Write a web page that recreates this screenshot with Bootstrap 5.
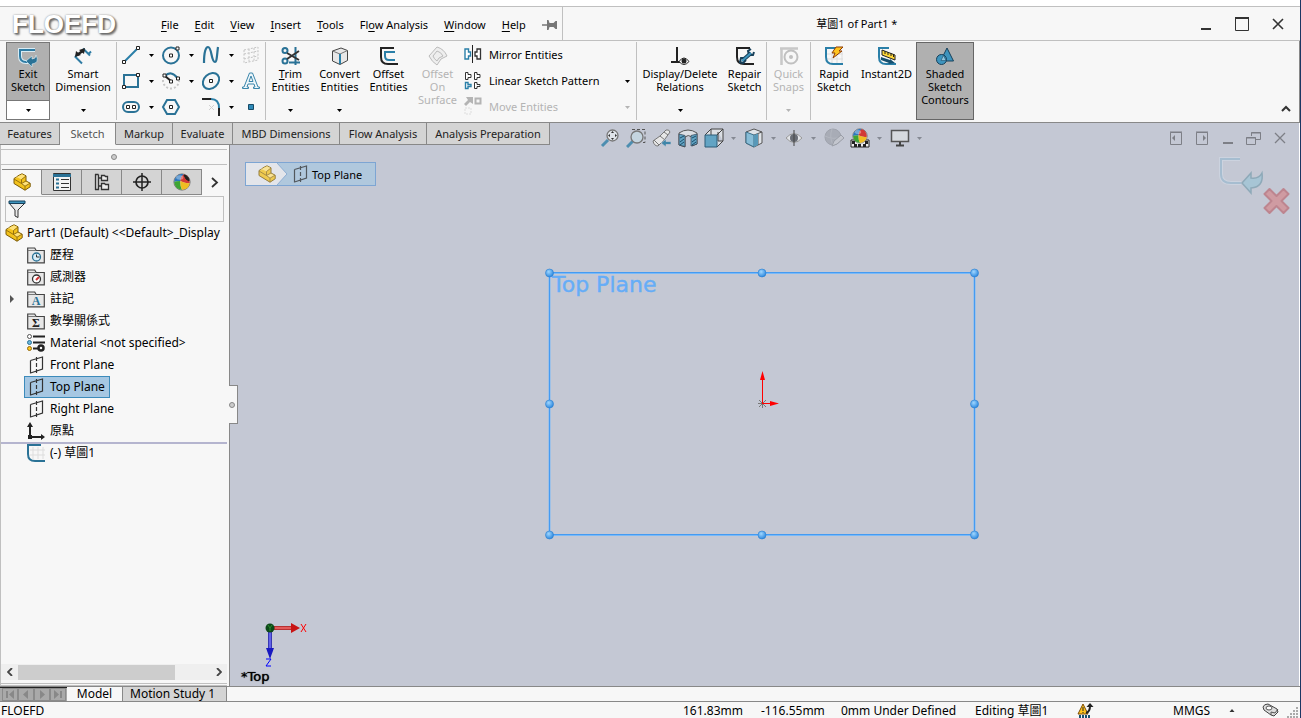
<!DOCTYPE html>
<html lang="en">
<head>
<meta charset="utf-8">
<meta name="viewport" content="width=device-width, initial-scale=1">
<title>草圖1 of Part1 *</title>
<link rel="stylesheet" href="https://cdn.jsdelivr.net/npm/bootstrap@5.3.0/dist/css/bootstrap.min.css">
<style>
:root{--panel:#f7f7f7;--line:#c0c0c0;--edge:#888;--tab:#d4d4d4;--canvas:#c4c8d4;--blue:#2a7296}
body{font-family:"Noto Sans","Noto Sans CJK TC",sans-serif;font-size:11px;line-height:13px;color:#000;background:#fff}
a{color:inherit;text-decoration:none}
svg{display:block;flex:none}
button{font:inherit;color:inherit;background:none;border:0;padding:0;border-radius:0}
button:disabled{color:#b4b4b4}
.app{min-height:100vh;border-right:1px solid #1c3663;overflow:hidden}
.titlebar{height:35px;margin-top:6px;background:var(--panel);border:solid var(--line);border-width:1px 0}
.logo{width:161px;padding-left:12px;font:bold 26px/34px "Liberation Sans",sans-serif;color:#fff;text-shadow:1px 1px 2px #666,2px 2px 2px #888,0 0 2px #999}
.menu{gap:16px;padding:2px 5px 0 0;border-right:1px solid var(--line)}
.menu u{text-underline-offset:2px}
.doc-title{font-size:11px;line-height:16px;padding-right:37px}
.win-ctl{width:36px;display:flex;justify-content:center}
.ribbon{height:82px;background:var(--panel);border-bottom:1px solid var(--edge);border-right:1px solid var(--edge);padding:1px 0 2px 6px}
.group{display:flex;border-right:1px solid var(--line)}
.tool{display:flex;flex-direction:column;align-items:center;width:49px;padding-top:4px;text-align:center;position:relative;white-space:nowrap}
.tool svg{margin-bottom:1px}
.tool .drop{position:absolute;bottom:8px;margin:0}
.w-dim{width:66px}.w-rel{width:86px}.w-fix{width:43px}.w-rapid{width:46px}.w-inst{width:59px}
.exit-wrap{width:44px;border:1px solid #777;background:#fff}
.exit-wrap .tool{background:#b0b0b0;width:42px;height:58px;padding-top:2px;border-bottom:1px solid #777}
.exit-wrap .tool svg{margin-bottom:0}
.exit-wrap .more{height:18px;display:flex;justify-content:center;align-items:center}
.pressed{width:58px;background:#b0b0b0;border:1px solid #666;padding-top:3px}
.draw{display:grid;grid-template-columns:repeat(4,40px);grid-template-rows:repeat(3,26px);width:149px}
.draw div{display:flex;align-items:center}
.draw button:first-child{width:28px;display:flex;justify-content:center}
.draw button + button{width:12px;display:flex;justify-content:center}
.pattern{width:174px}
.pattern>div{height:26px;display:flex;align-items:center}
.pattern button:first-child{display:flex;align-items:center;gap:5px;flex:1;text-align:left;padding-bottom:2px}
.pattern .arr{width:17px;display:flex;justify-content:center}
.workspace{background:var(--canvas);margin-right:1px}
.tabrow{height:22px}
.cmd-tabs{display:grid;grid-template-columns:60px 56px 57px 60px 107px 87px 123px;height:22px;margin:0;padding:0;list-style:none}
.cmd-tabs a{display:block;height:22px;line-height:21px;text-align:center;white-space:nowrap;background:var(--tab);color:#222;border:solid var(--edge);border-width:0 1px 1px 0}
.cmd-tabs a.on{background:var(--panel);border-bottom-color:var(--panel);color:#555}
.heads-up{height:30px;margin-left:47px;color:#858993}
.heads-up button,.doc-ctl button{width:26px;height:30px;display:flex;align-items:center;justify-content:center}
.heads-up .arr{width:14px;padding-right:2px}
.doc-ctl{height:30px;margin-right:6px}
.side{width:230px;background:var(--panel);border-right:1px solid var(--edge);border-left:1px solid var(--line);position:relative}
.grip{height:16px;margin:4px 2px 0 0;border:solid var(--line);border-width:1px 0;display:flex;justify-content:center;align-items:center}
.dot{width:6px;height:6px;border:1px solid #888;border-radius:50%;background:#ccc}
.side-tabs{height:26px;margin:4px 0 0 1px}
.side-tabs button{width:40px;flex:none;height:26px;background:var(--tab);border:1px solid var(--edge);border-left:0;display:flex;align-items:center;justify-content:center}
.side-tabs button.on{background:var(--panel);border-bottom-color:var(--panel)}
.side-tabs button.next{width:26px;background:none;border-color:transparent}
.filter{height:26px;margin:1px 5px 0 4px;border:1px solid var(--line);padding-left:2px}
.filter input{border:0;background:none;outline:0;min-width:0;height:22px}
.tree{list-style:none;padding:0 0 0 4px;margin:0;font-size:12px;line-height:20px}
.tree a{display:flex;align-items:center;height:22px;white-space:nowrap;gap:4px;overflow:hidden}
.tree .child a{width:max-content;margin-left:19px;padding:0 4px 0 2px;border:1px solid transparent;line-height:18px;gap:5px}
.tree .child{display:flex}
.tree .child .sel{background:#a6c7e2;border-color:#3c8bbb}
.tree .twisty{width:6px;margin:0 -10px 0 4px;align-self:center}
.rollback{border-top:2px solid #b5b5cf;height:2px;margin:0 2px -2px -4px}
.hscroll{height:16px;margin:0 2px 0 0;background:#efefef}
.hscroll .arr{width:17px;display:flex;justify-content:center}
.thumb{width:157px;background:#cdcdcd;height:15px}
.split-line{height:6px;margin-right:2px;border-bottom:3px double var(--line)}
.handle{position:absolute;left:228px;top:240px;width:9px;height:39px;background:var(--panel);border:1px solid var(--edge);border-left:0;display:flex;align-items:center}
.crumbs{margin:17px 0 0 15px;height:24px;width:131px;border:1px solid #7da5d3;background:#b0c8dd;font-size:11px;display:flex;align-items:center}
.crumbs .home{background:linear-gradient(#e3e5ea,#e3e5ea) left/31px 100% no-repeat;width:42px;height:22px;display:flex;justify-content:center;align-items:center;position:relative}
.crumbs .home .notch{position:absolute;left:31px;top:0}
.crumbs .home>svg:last-child{z-index:1}
.plane{position:absolute;left:312px;top:120px}
.plane text{font-family:"DejaVu Sans",sans-serif;font-size:22px}
.confirm{position:absolute;right:8px;top:11px}
.triad{position:absolute;left:30px;bottom:18px}
.view-name{position:absolute;left:11px;bottom:1px;font:13px/16px "DejaVu Sans",sans-serif;color:#000;text-shadow:0 0 1px #000}
.model-row{height:16px;background:var(--panel);border:solid var(--edge);border-width:1px 0}
.nav-keys{width:67px;padding-left:2px;background:#a9a9a9;border-top:1px solid #222}
.nav-keys button{width:16px;height:13px;border:1px solid #8b8b8b;display:flex;align-items:center;justify-content:center}
.m-tab{font-size:12px;line-height:13px;height:14px;border-right:1px solid var(--edge)}
.m-model{width:56px}
.m-motion{width:104px;padding-left:7px;background:var(--tab)}
.statusbar{height:16px;background:var(--panel);font-size:12px;line-height:17px;padding:0 1px;white-space:nowrap}
.statusbar span{flex:none}
.s-x{width:78px}.s-y{width:80px}.s-def{width:134px}.s-edit{width:102px}.s-warn{width:96px}.s-unit{width:56px}.s-up{width:33px}.s-tag{width:37px}
</style>
</head>
<body>
<svg width="0" height="0" class="position-absolute" aria-hidden="true">
  <defs>
    <radialGradient id="knob" cx=".4" cy=".35" r=".7"><stop offset="0" stop-color="#9fd6ff"/><stop offset="1" stop-color="#2583dc"/></radialGradient>
    <symbol id="dn" viewBox="0 0 5 3"><path d="M0 0h5L2.500 3z" fill="currentColor"/></symbol>
    <symbol id="part" viewBox="0 0 18 18"><path d="M1 5.500L4.500 3.500V3L9 .800l4 2V8l4.200 2.200v3.600L12 17.200 1 10.500z" fill="#f3c21c" stroke="#7b5b07" stroke-linejoin="round"/><path d="M1.500 6l3-1.500 4 2L12.500 3 9 1.300 5 3.200zM8.500 10.500l4-2 4 2-4.500 2.700z" fill="#ffe27a"/><path d="M8.500 6.500v4l3.500 2.700v4M8.500 6.500L13 3M8.500 10.500L13 8M12 13.200l5-3M1 6l7.500 4.500" fill="none" stroke="#8d6a0c" stroke-width=".9"/></symbol>
    <symbol id="planeico" viewBox="0 0 18 18"><path d="M3.500 4.500v13M3.500 4.500L15.500 1v12L3.500 17M9.500 1v4M9.500 7v4M9.500 13v4" fill="none" stroke="#333" stroke-width="1.200"/></symbol>
    <symbol id="folder" viewBox="0 0 18 18"><path d="M.700 16.800V2h7l1.500 2.500H17.300v12.300z" fill="#e7e7e7" stroke="#444" stroke-width="1.200"/><path d="M1 4.500h8" stroke="#777"/></symbol>
    <symbol id="ball" viewBox="0 0 20 20"><circle cx="10" cy="10" r="9" fill="#d9d9d9" stroke="#555" stroke-width=".8"/><path d="M8 9Q8 3 12 1.300 18 3 18.600 11q-5 1-10.600-2z" fill="#d23a35"/><path d="M8 9Q3 9 1.300 10 2 3 9 1.200h3Q8 4 8 9z" fill="#2c78c0"/><path d="M8 9q0 6 2 9.700Q2 18 1.300 10 3 9 8 9z" fill="#3fa535"/><path d="M8 9q6 3 10.600 2-1 7-8.600 7.700Q8 15 8 9z" fill="#efbd22"/><ellipse cx="7.500" cy="5" rx="4" ry="2.500" fill="#fff" opacity=".35"/></symbol>
  </defs>
</svg>

<div class="app d-flex flex-column">
  <header class="titlebar d-flex align-items-stretch">
    <div class="logo">FLOEFD</div>
    <nav class="menu d-flex align-items-center">
      <a href="#"><u>F</u>ile</a><a href="#"><u>E</u>dit</a><a href="#"><u>V</u>iew</a><a href="#"><u>I</u>nsert</a><a href="#"><u>T</u>ools</a><a href="#">Fl<u>o</u>w Analysis</a><a href="#"><u>W</u>indow</a><a href="#"><u>H</u>elp</a>
      <button type="button" aria-label="Pin menu"><svg width="15" height="10" viewBox="0 0 15 10"><path d="M0 5h6" stroke="#777" stroke-width="1.500"/><path d="M5 0h1.500l1 3h4l2-2h1.500v8h-1.500l-2-2h-4l-1 3H5z" fill="#777"/></svg></button>
    </nav>
    <div class="doc-title flex-fill text-center align-self-center">草圖1 of Part1 *</div>
    <div class="d-flex align-items-center pe-1">
      <button type="button" class="win-ctl" aria-label="Minimize"><svg width="16" height="16"><path d="M3 13h10" stroke="#333" stroke-width="2"/></svg></button>
      <button type="button" class="win-ctl" aria-label="Maximize"><svg width="16" height="16"><path d="M1 2h14" stroke="#333" stroke-width="2"/><path d="M1.500 2v12.500h13V2" fill="none" stroke="#333"/></svg></button>
      <button type="button" class="win-ctl" aria-label="Close"><svg width="12" height="12"><path d="M1 1l10 10M11 1L1 11" stroke="#333" stroke-width="1.600"/></svg></button>
    </div>
  </header>

  <section class="ribbon d-flex align-items-stretch">
    <div class="group">
      <div class="exit-wrap">
        <button type="button" class="tool"><svg width="22" height="22" viewBox="0 0 22 22"><path d="M18 5H3v6q0 6 6 6h3" fill="none" stroke="#d9ecf5" stroke-width="4"/><path d="M18 5H3v6q0 6 6 6h3" fill="none" stroke="#2f7ca4" stroke-width="2"/><path d="M9 16l6-5v3q4 0 4-4 4 8-4 9v3z" fill="#2a7296" stroke="#d9ecf5" stroke-width=".6"/></svg>Exit<br>Sketch</button>
        <button type="button" class="more w-100" aria-label="Exit options"><svg width="5" height="3"><use href="#dn"/></svg></button>
      </div>
      <button type="button" class="tool w-dim"><svg width="20" height="20" viewBox="0 0 20 20"><path d="M2 11l7 7M10 3l7 7M2 12l2-3M15 9l3-3" transform="translate(0 -.5)" stroke="#2f7ca4" stroke-width="2" fill="none"/><path d="M4 9l7-5" stroke="#222" stroke-width="2.500"/><path d="M2 11l1-6 5 4zM12 2l-1 6-5-4z" fill="#222"/></svg>Smart<br>Dimension<svg class="drop" width="5" height="3"><use href="#dn"/></svg></button>
    </div>
    <div class="group draw">
      <div><button type="button" aria-label="Line"><svg width="20" height="20" viewBox="0 0 20 20"><path d="M3 17L17 3" stroke="#2a7fa8" stroke-width="2"/><path d="M1.500 15.500h3v3h-3zM15.500 1.500h3v3h-3z" fill="#fff" stroke="#222"/></svg></button><button type="button" aria-label="Line options"><svg width="5" height="3"><use href="#dn"/></svg></button></div>
      <div><button type="button" aria-label="Circle"><svg width="20" height="20" viewBox="0 0 20 20"><circle cx="10" cy="10.500" r="8" fill="none" stroke="#2a7296" stroke-width="2"/><path d="M8.500 9h3v3h-3zM15 2h3v3h-3z" fill="#fff" stroke="#222"/></svg></button><button type="button" aria-label="Circle options"><svg width="5" height="3"><use href="#dn"/></svg></button></div>
      <div><button type="button" aria-label="Spline"><svg width="20" height="20" viewBox="0 0 20 20"><path d="M3 18C3 6 5 2 7 2c4 0 3 15 7 15 2 0 2-8 3-15" fill="none" stroke="#2a7296" stroke-width="2.200"/></svg></button><button type="button" aria-label="Spline options"><svg width="5" height="3"><use href="#dn"/></svg></button></div>
      <div><button type="button" disabled aria-label="Plane"><svg width="18" height="20" viewBox="0 0 18 20"><path d="M2 5l14-3v13L2 18zM7 4v13M12 3v13M2 9l14-3M2 14l14-3" fill="none" stroke="#c4c4c4" stroke-dasharray="2 1.500"/></svg></button></div>
      <div><button type="button" aria-label="Rectangle"><svg width="20" height="18" viewBox="0 0 20 18"><path d="M3 3h14v12H3z" fill="none" stroke="#2a7296" stroke-width="2"/><path d="M1.500 13.500h3v3h-3zM15.500 1.500h3v3h-3z" fill="#fff" stroke="#222"/></svg></button><button type="button" aria-label="Rectangle options"><svg width="5" height="3"><use href="#dn"/></svg></button></div>
      <div><button type="button" aria-label="Arc"><svg width="20" height="20" viewBox="0 0 20 20"><path d="M2 9a8 8 0 1 0 16 1" fill="none" stroke="#c8c8c8" stroke-width="2" stroke-dasharray="2 2"/><path d="M4 5Q10-1 16.500 7" fill="none" stroke="#2a7296" stroke-width="2.200"/><path d="M4 5l6 5" stroke="#222" stroke-width="2"/><path d="M2 3h3v3H2zM8.500 9h3v3h-3zM15.500 6h3v3h-3z" fill="#fff" stroke="#222"/></svg></button><button type="button" aria-label="Arc options"><svg width="5" height="3"><use href="#dn"/></svg></button></div>
      <div><button type="button" aria-label="Ellipse"><svg width="20" height="20" viewBox="0 0 20 20"><ellipse cx="10" cy="10" rx="9" ry="7" transform="rotate(-42 10 10)" fill="none" stroke="#2a7296" stroke-width="2"/><path d="M8.500 8.500h3v3h-3z" fill="#fff" stroke="#222"/></svg></button><button type="button" aria-label="Ellipse options"><svg width="5" height="3"><use href="#dn"/></svg></button></div>
      <div><button type="button" aria-label="Text"><svg width="20" height="20" viewBox="0 0 20 20"><path d="M1.500 17.500v-1.500h1.500L8.500 2h3L17 16h1.500v1.500h-6V16H14l-1-3H7l-1 3h1.500v1.500zM8 10.500h4l-2-5.500z" fill="#eef6fa" stroke="#3b86ab" fill-rule="evenodd"/></svg></button></div>
      <div><button type="button" aria-label="Slot"><svg width="20" height="14" viewBox="0 0 20 14"><rect x="2" y="2" width="16" height="10" rx="5" fill="none" stroke="#2a7296" stroke-width="2"/><path d="M5.500 5.500h3v3h-3zM11.500 5.500h3v3h-3z" fill="#fff" stroke="#222"/></svg></button><button type="button" aria-label="Slot options"><svg width="5" height="3"><use href="#dn"/></svg></button></div>
      <div><button type="button" aria-label="Polygon"><svg width="20" height="18" viewBox="0 0 20 18"><path d="M6 2h8l4 7-4 7H6L2 9z" fill="none" stroke="#2a7296" stroke-width="2"/><path d="M8.500 7.500h3v3h-3z" fill="#fff" stroke="#222"/></svg></button></div>
      <div><button type="button" aria-label="Fillet"><svg width="20" height="20" viewBox="0 0 20 20"><path d="M1 2h9M18 11v8" stroke="#222" stroke-width="2"/><path d="M10 2q8 0 8 9" fill="none" stroke="#2a7fa8" stroke-width="2"/><path d="M8 8l5 5M13 8l-5 5" stroke="#d0d0d0"/></svg></button><button type="button" aria-label="Fillet options"><svg width="5" height="3"><use href="#dn"/></svg></button></div>
      <div><button type="button" aria-label="Point"><svg width="6" height="6"><path d="M.500.500h5v5h-5z" fill="#2f8ab8" stroke="#174a66"/></svg></button></div>
    </div>
    <div class="group">
      <button type="button" class="tool"><svg width="20" height="20" viewBox="0 0 20 20"><path d="M14.500 1v18M8 16.500h11" stroke="#2a7296" stroke-width="2"/><circle cx="4" cy="4.500" r="2.500" fill="none" stroke="#2a7296" stroke-width="2"/><circle cx="4" cy="15" r="2.500" fill="none" stroke="#2a7296" stroke-width="2"/><path d="M6 13l12-8M6 7l12 7" stroke="#333" stroke-width="2"/></svg><span><u>T</u>rim<br>Entities</span><svg class="drop" width="5" height="3"><use href="#dn"/></svg></button>
      <button type="button" class="tool"><svg width="20" height="20" viewBox="0 0 20 20"><path d="M2.500 5L11 2l6.500 2.500v10L10 18.500 2.500 15z" fill="#e8e8e8" stroke="#444"/><path d="M2.500 5L10 8l7.500-3.500" fill="none" stroke="#777"/><path d="M10 8v10" stroke="#2a7fa8" stroke-width="2"/></svg>Convert<br>Entities<svg class="drop" width="5" height="3"><use href="#dn"/></svg></button>
      <button type="button" class="tool"><svg width="20" height="20" viewBox="0 0 20 20"><path d="M15 2H2v9q0 7 7 7h10" fill="none" stroke="#222" stroke-width="2"/><path d="M16 6H6v4q0 4 4 4h6" fill="none" stroke="#2a7fa8" stroke-width="2"/></svg>Offset<br>Entities</button>
      <button type="button" class="tool" disabled><svg width="20" height="20" viewBox="0 0 20 20"><path d="M1 10L9 1q7 2 10 9l-6 3-4 6q-5-3-8-9z" fill="#eee" stroke="#bbb"/><path d="M5 10l4-5q4 1 6 5l-4 2-2 3q-3-2-4-5z" fill="none" stroke="#bbb"/></svg>Offset<br>On<br>Surface</button>
      <div class="pattern">
        <div><button type="button"><svg width="22" height="20" viewBox="0 0 22 20"><path d="M3 5h3.500v3h2v4h-2v3H3z" fill="#fff" stroke="#2a7fa8" stroke-width="1.400"/><path d="M18.500 5H15v3h-2v4h2v3h3.500z" fill="#fff" stroke="#333" stroke-width="1.300"/><path d="M10.500 1v18" stroke="#222"/></svg>Mirror Entities</button></div>
        <div><button type="button"><svg width="22" height="20" viewBox="0 0 22 20"><path d="M3.500 2.500h2.500v2h3v3H6v2H3.500zM12.500 2.500H15v2h3v3h-3v2h-2.500zM12.500 12.500H15v2h3v2h-3v2h-2.500z" fill="#fff" stroke="#333"/><path d="M3.500 12.500H6v2h3v2H6v2H3.500z" fill="#fff" stroke="#2a7fa8" stroke-width="1.400"/></svg>Linear Sketch Pattern</button><button type="button" class="arr" aria-label="Pattern options"><svg width="5" height="3"><use href="#dn"/></svg></button></div>
        <div><button type="button" disabled><svg width="22" height="20" viewBox="0 0 22 20"><path d="M2 8l4-4-2-3h7v7L8 6l-4 4z" fill="#b4b4b4"/><path d="M13.500 2.500h5v5h-5z" fill="none" stroke="#b4b4b4" stroke-width="2"/><path d="M3 12h6v6H3z" fill="none" stroke="#ddd" stroke-dasharray="2 1"/></svg>Move Entities</button><button type="button" class="arr" aria-label="Move options" disabled><svg width="5" height="3"><use href="#dn"/></svg></button></div>
      </div>
    </div>
    <div class="group">
      <button type="button" class="tool w-rel"><svg width="20" height="20" viewBox="0 0 20 20"><path d="M7 1v15M1 16h9" stroke="#222" stroke-width="2"/><path d="M9 15.500q5-7 10 0-5 6-10 0z" fill="#fff" stroke="#222"/><circle cx="14" cy="15" r="2.500" fill="#222"/></svg>Display/Delete<br>Relations<svg class="drop" width="5" height="3"><use href="#dn"/></svg></button>
      <button type="button" class="tool w-fix"><svg width="20" height="20" viewBox="0 0 20 20"><path d="M15 2H2v9q0 7 7 7h10" fill="none" stroke="#222" stroke-width="2"/><path d="M8 14l8-7" stroke="#17405a" stroke-width="4"/><path d="M16 3l-3 2 1 4 4 0 1-3M10 12l-4 0-1 4 3 1 3-3" fill="none" stroke="#17405a" stroke-width="2"/><path d="M7 15l9-8" stroke="#3e94bd" stroke-width="2"/></svg>Repair<br>Sketch</button>
    </div>
    <div class="group">
      <button type="button" class="tool w-fix" disabled><svg width="20" height="20" viewBox="0 0 20 20"><path d="M1 2.500h18M2.500 2v17" stroke="#c8c8c8" stroke-width="2.500"/><circle cx="12" cy="11" r="6.500" fill="none" stroke="#c0c0c0" stroke-width="2"/><circle cx="12" cy="11" r="2" fill="#c0c0c0"/></svg>Quick<br>Snaps<svg class="drop" width="5" height="3"><use href="#dn"/></svg></button>
    </div>
    <div class="d-flex">
      <button type="button" class="tool w-rapid"><svg width="20" height="20" viewBox="0 0 20 20"><path d="M8 5v14M13 5v14M18 5v14M3 8h16M3 13h16" stroke="#ddd"/><path d="M12 2H2v9q0 7 7 7h10" fill="none" stroke="#2a7fa8" stroke-width="2"/><path d="M12 1h7l-4 4h3L9 12l2-5H8z" fill="#ffc41e" stroke="#8e3b05"/></svg>Rapid<br>Sketch</button>
      <button type="button" class="tool w-inst"><svg width="20" height="20" viewBox="0 0 20 20"><path d="M12 2H2v9q0 7 7 7h10" fill="none" stroke="#2a7fa8" stroke-width="2"/><path d="M5 4l13 5v5L5 9z" fill="#ffd637" stroke="#222"/><path d="M8 5v3M11 6v3M14 7v3M16.500 8v3" stroke="#222"/><path d="M4 11l9 3v-1l5 4-7 1 1-1-8-3z" fill="#17506f"/></svg>Instant2D</button>
      <button type="button" class="tool pressed"><svg width="20" height="20" viewBox="0 0 20 20"><path d="M12 2l6.500 13h-13z" fill="#3e94bd" stroke="#17405a"/><circle cx="6.500" cy="13.500" r="5" fill="#3e94bd" stroke="#17405a"/><path d="M8.500 9.500l2.500 5H6z" fill="#93c6df" stroke="#17405a" stroke-width=".5"/></svg>Shaded<br>Sketch<br>Contours</button>
    </div>
    <button type="button" class="ms-auto align-self-end pe-2 pb-2" aria-label="Collapse ribbon"><svg width="10" height="7"><path d="M1 6l4-4 4 4" fill="none" stroke="#333" stroke-width="2"/></svg></button>
  </section>

  <main class="workspace flex-fill d-flex flex-column">
    <div class="tabrow d-flex">
      <ul class="cmd-tabs">
        <li><a href="#">Features</a></li><li><a href="#" class="on">Sketch</a></li><li><a href="#">Markup</a></li><li><a href="#">Evaluate</a></li><li><a href="#">MBD Dimensions</a></li><li><a href="#">Flow Analysis</a></li><li><a href="#">Analysis Preparation</a></li>
      </ul>
      <div class="heads-up d-flex">
        <button type="button" aria-label="Zoom to fit"><svg width="20" height="20" viewBox="0 0 20 20"><path d="M2 18l6-6" stroke="#4d8eb0" stroke-width="3"/><circle cx="12.500" cy="7.500" r="5.500" fill="#dfe3e9" stroke="#777" stroke-width="1.300"/><path d="M12.500 3l1.500 2h-3zM12.500 12l1.500-2h-3zM8 7.500L10 6v3zM17 7.500L15 6v3z" fill="#333"/></svg></button>
        <button type="button" aria-label="Zoom to area"><svg width="20" height="20" viewBox="0 0 20 20"><path d="M6 1.500h13v13h-3" fill="none" stroke="#555" stroke-dasharray="3 2"/><path d="M1 19l6-6" stroke="#4d8eb0" stroke-width="3"/><circle cx="11" cy="9" r="6" fill="#c5d5e0" stroke="#777" stroke-width="1.300"/></svg></button>
        <button type="button" aria-label="Previous view"><svg width="20" height="20" viewBox="0 0 20 20"><path d="M1 13l7-5 6-6q3-1 4 2l-5 7-7 7q-4 0-5-5z" fill="#e6e6e6" stroke="#777"/><path d="M8 8l5 4M12 4l4 3M2 12l5 5" stroke="#777"/><path d="M9 15l5-4v2.500h5v3h-5V19z" fill="#3f86a9" stroke="#c4c8d4" stroke-width=".7"/></svg></button>
        <button type="button" aria-label="Section view"><svg width="20" height="20" viewBox="0 0 20 20"><path d="M1 5q9-6 18 0v11l-5 2V9q-4-3-7 0v10l-6-2z" fill="#dcdfe4" stroke="#555"/><path d="M1 6l6 1.500v11L1 17zM13 7.500L19 6v10l-6 2z" fill="#62a4c4" stroke="#345" stroke-width=".7"/><path d="M2 10l4-2M2 14l4-3M2 17l4-3M14 10l4-2M14 14l4-3M14 17l4-3" stroke="#1b4d68"/></svg></button>
        <button type="button" aria-label="View orientation"><svg width="20" height="20" viewBox="0 0 20 20"><path d="M1 7l6-6h12v12l-6 6M7 1v6M13 7l6-6M14 4v9h5" fill="#dcdfe4" stroke="#444"/><path d="M1 7h12v12H1z" fill="#62a4c4" stroke="#2c5d79"/></svg></button><button type="button" class="arr" aria-label="Orientation options"><svg width="5" height="3"><use href="#dn"/></svg></button>
        <button type="button" aria-label="Display style"><svg width="20" height="20" viewBox="0 0 20 20"><path d="M2 4l8-3 8 3v11l-8 4-8-4z" fill="#dfe3e8" stroke="#555"/><path d="M2 4l8 3v12l-8-4z" fill="#88bdd7" stroke="#3b6e89"/><path d="M10 7l8-3M14 6v11" stroke="#555"/><path d="M10 7l4-1.500V17l-4 2z" fill="#5798b8"/></svg></button><button type="button" class="arr" aria-label="Style options"><svg width="5" height="3"><use href="#dn"/></svg></button>
        <button type="button" aria-label="Hide or show items"><svg width="20" height="20" viewBox="0 0 20 20"><path d="M2 10q8-9 16 0-8 9-16 0z" fill="#e2e4e8" stroke="#999"/><circle cx="10" cy="10" r="4" fill="#6a6e76"/><path d="M10 2v16" stroke="#444"/></svg></button><button type="button" class="arr" aria-label="Visibility options"><svg width="5" height="3"><use href="#dn"/></svg></button>
        <button type="button" aria-label="Edit appearance"><svg width="20" height="20" viewBox="0 0 20 20"><circle cx="9" cy="9" r="8" fill="#a8acb6" stroke="#a0a4ae"/><path d="M8 1q-3 8 1 16M1 8q8 4 16 1" fill="none" stroke="#b3b7c0"/><path d="M8 18l2-5 7-6 3 3-7 6z" fill="#c3c6ce" stroke="#9a9ea7"/></svg></button>
        <button type="button" aria-label="Apply scene"><svg width="20" height="20" viewBox="0 0 20 20"><path d="M1 12h18v7H1z" fill="#eee" stroke="#222"/><path d="M2 13h3v3H2zM8 16h3v3H8zM15 13h3v3h-3zM4 16h3v3H4zM13 16h3v3h-3z" fill="#222"/><svg x="2" width="16" height="16"><use href="#ball"/></svg></svg></button><button type="button" class="arr" aria-label="Scene options"><svg width="5" height="3"><use href="#dn"/></svg></button>
        <button type="button" aria-label="View settings"><svg width="20" height="20" viewBox="0 0 20 20"><path d="M1.500 2.500h17v11h-17z" fill="#d7dade" stroke="#555" stroke-width="1.500"/><path d="M10 14v3M6 17.500h8" stroke="#444" stroke-width="2"/></svg></button><button type="button" class="arr" aria-label="Settings options"><svg width="5" height="3"><use href="#dn"/></svg></button>
      </div>
      <div class="doc-ctl d-flex ms-auto">
        <button type="button" aria-label="Dock left"><svg width="12" height="14"><path d="M.500 1.500h11v12H.500zM0 1h12" fill="none" stroke="#7d7f86"/><path d="M2 7l3-3v6z" fill="#7d7f86"/></svg></button>
        <button type="button" aria-label="Dock right"><svg width="12" height="14"><path d="M.500 1.500h11v12H.500zM0 1h12" fill="none" stroke="#7d7f86"/><path d="M10 7L7 4v6z" fill="#7d7f86"/></svg></button>
        <button type="button" aria-label="Minimize document"><svg width="12" height="14"><path d="M1 12h10" stroke="#7d7f86" stroke-width="2"/></svg></button>
        <button type="button" aria-label="Restore document"><svg width="16" height="14"><path d="M5.500 5V1.500h9v7H10M5 2h10M.500 6.500h9v7h-9zM0 7h10" fill="none" stroke="#7d7f86"/></svg></button>
        <button type="button" aria-label="Close document"><svg width="12" height="12"><path d="M1 1l10 10M11 1L1 11" stroke="#7d7f86" stroke-width="1.300"/></svg></button>
      </div>
    </div>

    <div class="d-flex flex-fill">
      <aside class="side d-flex flex-column flex-shrink-0">
        <div class="grip"><span class="dot"></span></div>
        <div class="side-tabs d-flex">
          <button type="button" class="on" aria-label="Feature tree"><svg width="18" height="18"><use href="#part"/></svg></button>
          <button type="button" aria-label="Properties"><svg width="18" height="18"><path d="M.500.500h17v17H.500z" fill="#f4f4f4" stroke="#333"/><path d="M0 2.500h18" stroke="#2a7296" stroke-width="3"/><path d="M3 6.500h3M3 10.500h3M3 14.500h3" stroke="#2a7296" stroke-width="2"/><path d="M8 6.500h8M8 10.500h8M8 14.500h8" stroke="#333"/></svg></button>
          <button type="button" aria-label="Configurations"><svg width="18" height="18"><path d="M2.500 1v16M2 16.500h3.500V1.500M2 1.500h3.500M5.500 5h3M5.500 13h3" fill="none" stroke="#333" stroke-width="1.300"/><path d="M8.500 2.500h3l1 1h2v4h-6zM8.500 10.500h3l1 1h3v5h-7z" fill="#eee" stroke="#333" stroke-width="1.300"/></svg></button>
          <button type="button" aria-label="Dimensions"><svg width="18" height="18"><circle cx="9" cy="9" r="6" fill="none" stroke="#222" stroke-width="1.700"/><path d="M9 0v18M0 9h18" stroke="#222" stroke-width="1.500"/></svg></button>
          <button type="button" aria-label="Appearances"><svg width="18" height="18"><use href="#ball"/><path d="M11 2q5 1 5 6l-3-2z" fill="#222" stroke="#222"/></svg></button>
          <button type="button" class="next" aria-label="More tabs"><svg width="8" height="11"><path d="M1 1l5 4.500L1 10" fill="none" stroke="#333" stroke-width="1.800"/></svg></button>
        </div>
        <div class="filter d-flex align-items-center"><svg width="18" height="18" viewBox="0 0 18 18"><path d="M1 3l6 7v6l3 1.500V10l7-7z" fill="#e9e9e9" stroke="#333"/><path d="M1 1h16v2.500H1z" fill="#3e94bd" stroke="#17405a"/></svg><input type="text" class="flex-fill" aria-label="Filter tree"></div>
        <ul class="tree flex-fill">
          <li><a href="#"><svg width="18" height="18"><use href="#part"/></svg>Part1 (Default) &lt;&lt;Default&gt;_Display</a></li>
          <li class="child"><a href="#"><svg width="18" height="18"><use href="#folder"/><circle cx="9.500" cy="11" r="4" fill="#d9edf7" stroke="#2a7296" stroke-width="1.300"/><path d="M9.500 8.500V11h3" fill="none" stroke="#333"/></svg>歷程</a></li>
          <li class="child"><a href="#"><svg width="18" height="18"><use href="#folder"/><circle cx="9.500" cy="11" r="4" fill="#fff" stroke="#333" stroke-width="1.300"/><path d="M9 12l3-3" stroke="#c33" stroke-width="2"/></svg>感測器</a></li>
          <li class="child"><svg class="twisty" height="8" viewBox="0 0 6 8"><path d="M1 0l4 4-4 4z" fill="#555"/></svg><a href="#"><svg width="18" height="18"><use href="#folder"/><text x="9" y="15" text-anchor="middle" font-family="Liberation Serif, serif" font-weight="bold" font-size="12" fill="#2a7296">A</text></svg>註記</a></li>
          <li class="child"><a href="#"><svg width="18" height="18"><use href="#folder"/><text x="9" y="15" text-anchor="middle" font-family="Liberation Serif, serif" font-weight="bold" font-size="12" fill="#222">Σ</text></svg>數學關係式</a></li>
          <li class="child"><a href="#"><svg width="18" height="18"><path d="M6 2.500h12M6 8.500h12M6 14.500h6" stroke="#222" stroke-width="1.800"/><circle cx="2.500" cy="2.500" r="2" fill="#fff" stroke="#555"/><circle cx="2.500" cy="8.500" r="2" fill="#6bb5da" stroke="#2a7296"/><circle cx="2.500" cy="14.500" r="2" fill="#ffc61e" stroke="#94690a"/><circle cx="14" cy="14" r="2.500" fill="none" stroke="#222" stroke-width="2.500"/></svg>Material &lt;not specified&gt;</a></li>
          <li class="child"><a href="#"><svg width="18" height="18"><use href="#planeico"/></svg>Front Plane</a></li>
          <li class="child"><a href="#" class="sel"><svg width="18" height="18"><use href="#planeico"/></svg>Top Plane</a></li>
          <li class="child"><a href="#"><svg width="18" height="18"><use href="#planeico"/></svg>Right Plane</a></li>
          <li class="child"><a href="#"><svg width="18" height="18"><path d="M3 2v13h13" fill="none" stroke="#222" stroke-width="2"/><path d="M0 5l3-5 3 5zM14 12l4 3-4 3zM1 13h4v4H1z" fill="#222"/></svg>原點</a></li>
          <li class="rollback"></li>
          <li class="child"><a href="#"><svg width="18" height="18"><path d="M6 3v12M11 3v12M16 3v12M3 6h15M3 11h15" stroke="#ddd"/><path d="M14 1H1v9q0 7 7 7h10" fill="none" stroke="#2a7296" stroke-width="2"/></svg>(-) 草圖1</a></li>
        </ul>
        <div class="hscroll d-flex align-items-center">
          <button type="button" class="arr" aria-label="Scroll left"><svg width="6" height="8"><path d="M5 0L1 4l4 4" fill="none" stroke="#444" stroke-width="1.800"/></svg></button>
          <div class="thumb"></div>
          <button type="button" class="arr ms-auto" aria-label="Scroll right"><svg width="6" height="8"><path d="M1 0l4 4-4 4" fill="none" stroke="#444" stroke-width="1.800"/></svg></button>
        </div>
        <div class="split-line"></div>
        <div class="handle"><span class="dot"></span></div>
      </aside>

      <section class="flex-fill position-relative">
        <nav class="crumbs" aria-label="Selection">
          <a href="#" class="home" aria-label="Part1"><svg class="notch" width="11" height="22"><path d="M0 0l10 11L0 22z" fill="#e3e5ea"/><path d="M0 0l10 11L0 22" fill="none" stroke="#8eaed2"/></svg><svg width="18" height="18" opacity=".75"><use href="#part"/></svg></a>
          <a href="#" class="d-flex align-items-center gap-1 ps-1"><svg width="16" height="18" viewBox="1 0 16 18" opacity=".75"><use href="#planeico" width="18" height="18"/></svg>Top Plane</a>
        </nav>
        <svg class="plane" width="440" height="280" role="img" aria-label="Top Plane sketch">
          <path d="M7.500 8h425v262H7.500z" fill="none" stroke="#7abaf8" stroke-width="2"/>
          <path d="M7.500 7.500h425v262H7.500z" fill="none" stroke="#459bf2"/>
          <text x="10" y="27" fill="#66adf7" stroke="#66adf7" stroke-width=".4">Top Plane</text>
          <g fill="url(#knob)" stroke="#2b7fd0" stroke-width=".6"><circle cx="7.500" cy="8" r="4"/><circle cx="220" cy="8" r="4"/><circle cx="432.500" cy="8" r="4"/><circle cx="7.500" cy="139" r="4"/><circle cx="432.500" cy="139" r="4"/><circle cx="7.500" cy="270" r="4"/><circle cx="220" cy="270" r="4"/><circle cx="432.500" cy="270" r="4"/></g>
          <path d="M217 135l7 7M224 135l-7 7M216 138.500h8M220.500 134v9" stroke="#777"/>
          <path d="M220.500 139v-26M220 138.500h11" stroke="#f00"/><path d="M218 115l2.500-9 2.500 9zM228 136l9 2.500-9 2.500z" fill="#f00"/>
        </svg>
        <svg class="confirm" width="76" height="60" viewBox="0 0 76 60">
          <path d="M25 3H6v15q0 9 10 9h10" fill="none" stroke="#ccd3df" stroke-width="4"/><path d="M25 3H6v15q0 9 10 9h10" fill="none" stroke="#a6bdd0" stroke-width="2"/>
          <path d="M27 27l9-10v5q8 1 11-5 2 14-11 15v5z" fill="#a7c5d5" stroke="#8ea9b8" stroke-width="1.500"/>
          <path d="M50 39l5-5 7 7 7-7 5 5-7 7 7 7-5 5-7-7-7 7-5-5 7-7z" fill="#cf9ba2" stroke="#bd858f" stroke-linejoin="round" stroke-width="2" transform="translate(-.5 -1)"/>
        </svg>
        <svg class="triad" width="50" height="48" viewBox="0 0 50 48"><path d="M14 6.500h18v3H14z" fill="#e35a5a" stroke="#b01818" stroke-width=".8"/><path d="M31 3l9 5-9 5z" fill="#c81414"/><path d="M8.500 10h3v19h-3z" fill="#6262e8" stroke="#2020a8" stroke-width=".8"/><path d="M6 28h8l-4 11z" fill="#1818c0"/><circle cx="10" cy="8" r="4.500" fill="#0c4a18"/><path d="M8 5l2 3 2-3M10 8v3" stroke="#2c8d2c" fill="none"/><path d="M41 4l5 8M46 4l-5 8" stroke="#f00"/><path d="M6 39h5l-5 7h5" stroke="#00f" fill="none"/></svg>
        <div class="view-name">*Top</div>
      </section>
    </div>
  </main>

  <footer>
    <div class="model-row d-flex">
      <div class="nav-keys d-flex">
        <button type="button" aria-label="First"><svg width="10" height="9"><path d="M2 1v7" stroke="#888" stroke-width="2"/><path d="M9 0v9L4 4.500z" fill="#888"/></svg></button>
        <button type="button" aria-label="Previous"><svg width="8" height="9"><path d="M6 0v9L1 4.500z" fill="#888"/></svg></button>
        <button type="button" aria-label="Next"><svg width="8" height="9"><path d="M2 0v9l5-4.500z" fill="#888"/></svg></button>
        <button type="button" aria-label="Last"><svg width="10" height="9"><path d="M8 1v7" stroke="#888" stroke-width="2"/><path d="M1 0v9l5-4.500z" fill="#888"/></svg></button>
      </div>
      <a href="#" class="m-tab m-model text-center">Model</a>
      <a href="#" class="m-tab m-motion">Motion Study 1</a>
    </div>
    <div class="statusbar d-flex">
      <span class="me-auto">FLOEFD</span>
      <span class="s-x">161.83mm</span><span class="s-y">-116.55mm</span><span class="s-def">0mm Under Defined</span><span class="s-edit">Editing 草圖1</span>
      <span class="s-warn"><svg width="17" height="16"><path d="M1 12l5-10 5 10z" fill="#ffc41e" stroke="#7a4a04"/><path d="M6 5v4M6 10v1" stroke="#222"/><path d="M9 11q4-1 4-7" fill="none" stroke="#222" stroke-width="2"/><path d="M9.500 5L13 1l3.500 4z" fill="#222"/><path d="M2 14.500h11" stroke="#17506f" stroke-width="3" stroke-dasharray="2 1"/></svg></span>
      <span class="s-unit">MMGS</span><span class="s-up d-flex align-items-center"><svg width="6" height="3" viewBox="0 0 5 3"><path d="M0 3h5L2.500 0z" fill="#333"/></svg></span>
      <span class="s-tag d-flex"><svg width="18" height="16"><path d="M1 5q1-3 5-3l9 5 1 3-4 4-3-1-7-5z" fill="#ddd" stroke="#444"/><ellipse cx="7" cy="6" rx="3" ry="2" fill="#fff" stroke="#555"/><path d="M9 10l4 1 3-4M9 10v3" fill="none" stroke="#555"/></svg><svg width="12" height="16" class="ms-auto"><path d="M9 6h2M6 9h5M3 12h8M0 15h11" stroke="#aaa" stroke-width="2" stroke-dasharray="2 1"/></svg></span>
    </div>
  </footer>
</div>
<script src="https://cdn.jsdelivr.net/npm/bootstrap@5.3.0/dist/js/bootstrap.bundle.min.js"></script>
</body>
</html>
